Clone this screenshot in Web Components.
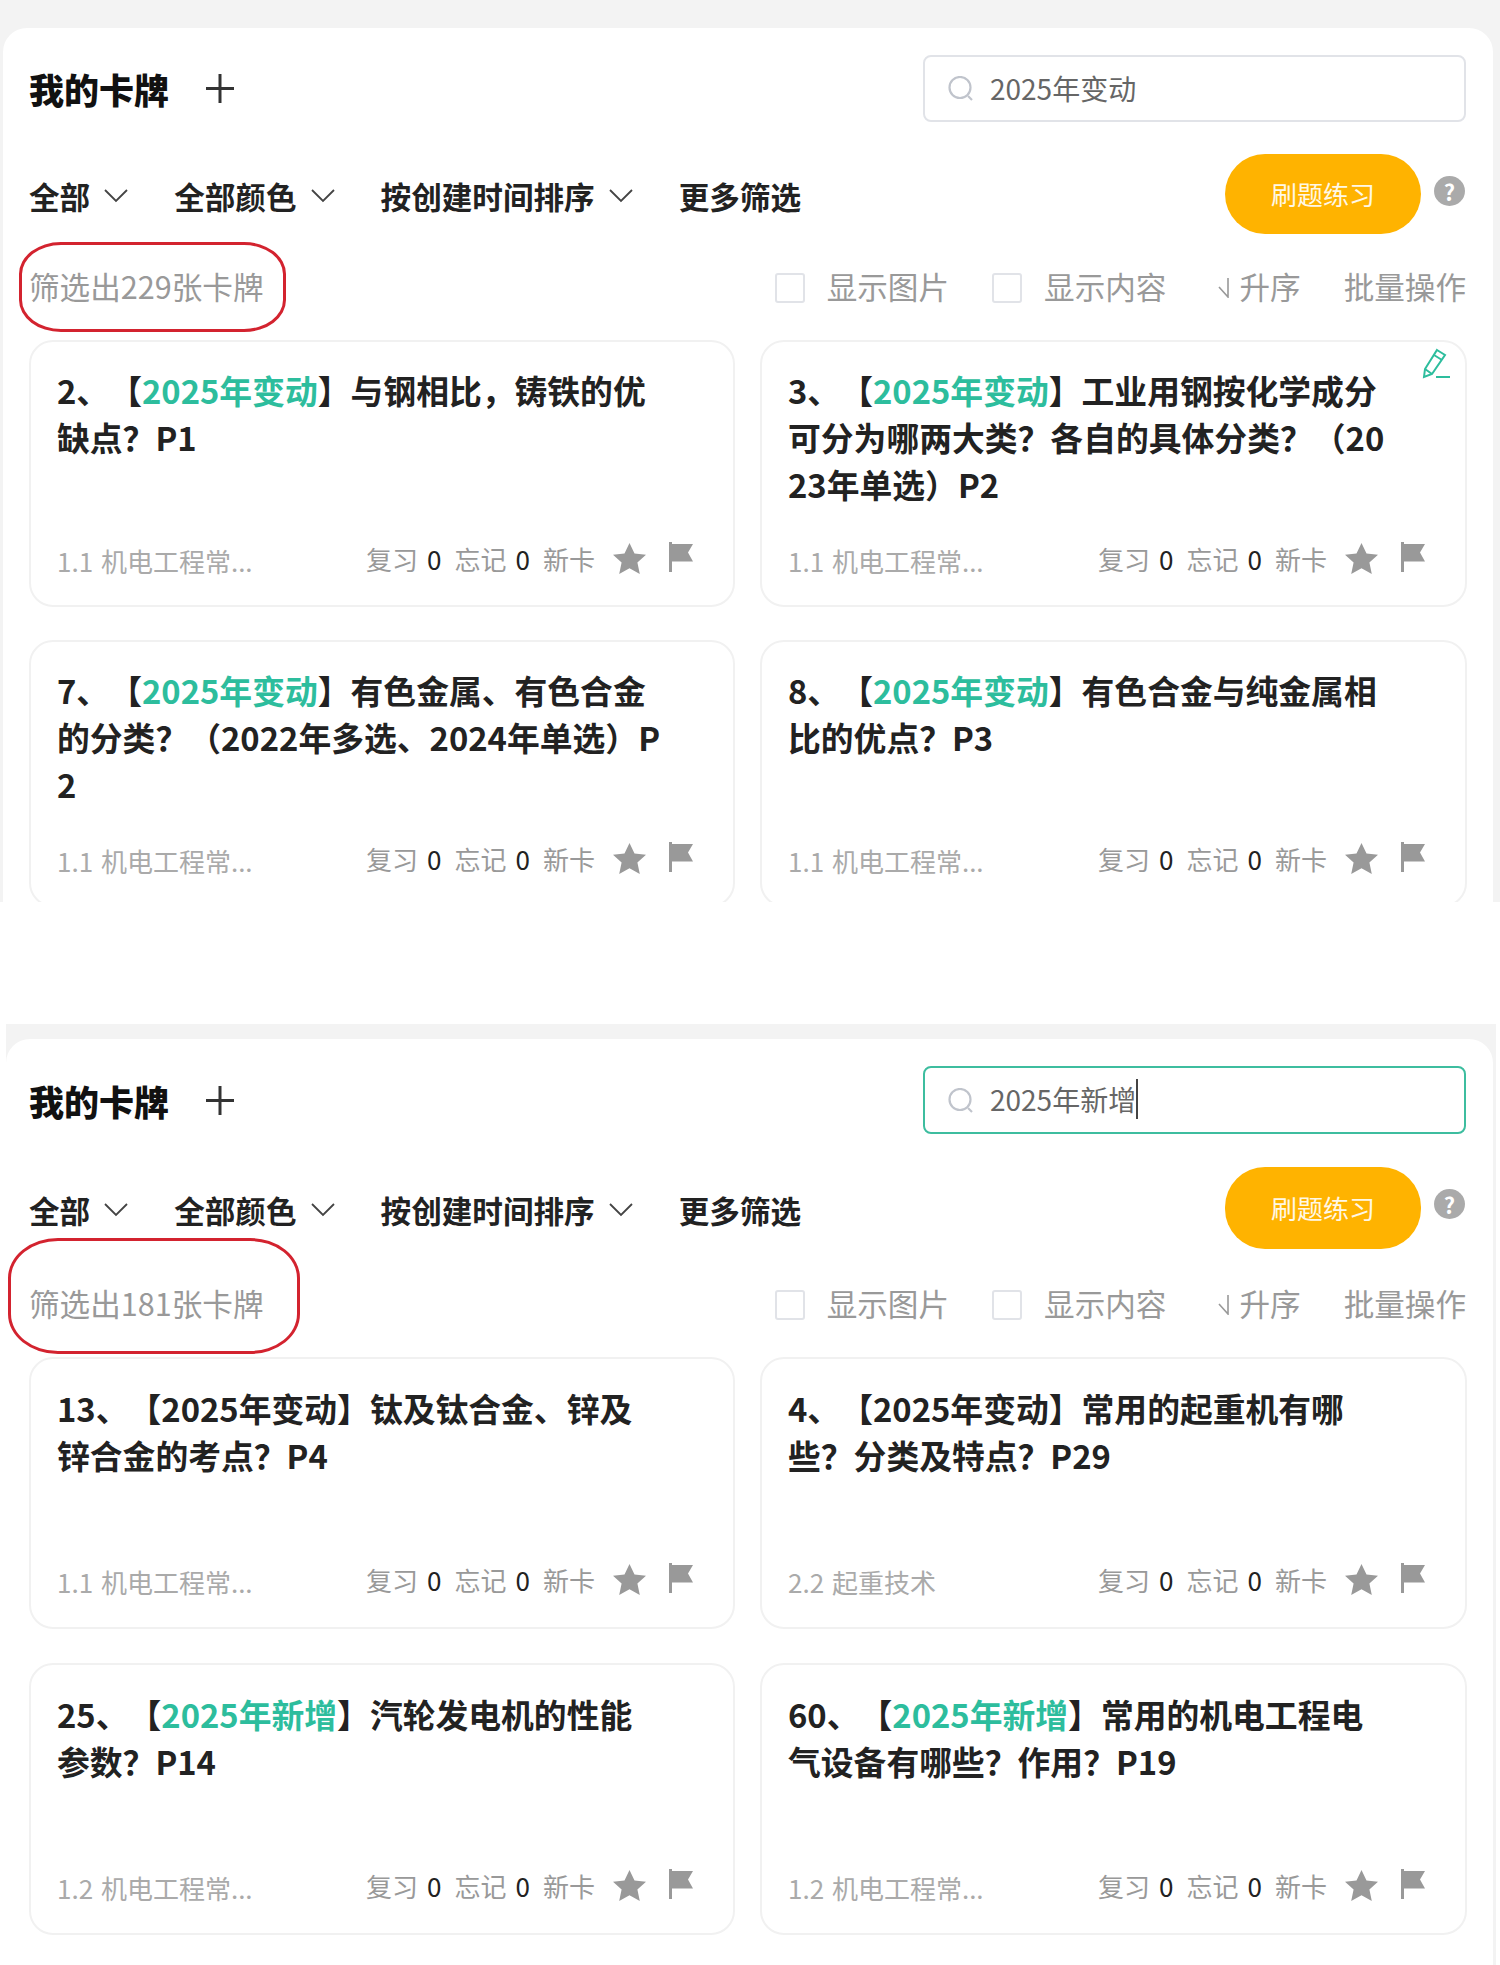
<!DOCTYPE html>
<html lang="zh">
<head>
<meta charset="utf-8">
<title>我的卡牌</title>
<style>
  html, body { margin: 0; background: #fff; }
  body { font-family: "Noto Sans CJK SC", "Noto Sans", sans-serif; color: #222; }
</style>
</head>
<body>

<card-screen query="2025年变动" count="229"
  style="--shell-top:28px;--shell-left:3px;--shell-right:7px;--shell-ml:0px;--shell-mr:0px;--sheet-h:874px;--pad-left:26px;--search-h:67px;--btn-h:80px;--gap-a:32px;--stats-mt:27px;--stats-mb:27px;--card-h:267px;--card-gap:33px;--title-pt:24px;--foot-pb:29px;--ring-l:-10px;--ring-t:-19px;--ring-w:267px;--ring-h:90px;--ring-r:42px / 32px;--after:122px;">
  <deck-card meta="1.1 机电工程常..."><span>2、【<tag-mark>2025年变动</tag-mark>】与钢相比，铸铁的优缺点？P1</span></deck-card>
  <deck-card meta="1.1 机电工程常..." edit><span>3、【<tag-mark>2025年变动</tag-mark>】工业用钢按化学成分可分为哪两大类？各自的具体分类？（2023年单选）P2</span></deck-card>
  <deck-card meta="1.1 机电工程常..."><span>7、【<tag-mark>2025年变动</tag-mark>】有色金属、有色合金的分类？（2022年多选、2024年单选）P2</span></deck-card>
  <deck-card meta="1.1 机电工程常..."><span>8、【<tag-mark>2025年变动</tag-mark>】有色合金与纯金属相比的优点？P3</span></deck-card>
</card-screen>

<card-screen query="2025年新增" count="181" focused
  style="--shell-top:15px;--shell-left:0px;--shell-right:3px;--shell-ml:6px;--shell-mr:4px;--sheet-h:926px;--pad-left:23px;--search-h:68px;--btn-h:82px;--gap-a:33px;--stats-mt:29px;--stats-mb:27px;--card-h:272px;--card-gap:34px;--title-pt:25px;--foot-pb:30px;--ring-l:-21px;--ring-t:-40px;--ring-w:292px;--ring-h:116px;--ring-r:50px / 40px;--after:0px;">
  <deck-card meta="1.1 机电工程常..."><span>13、【2025年变动】钛及钛合金、锌及锌合金的考点？P4</span></deck-card>
  <deck-card meta="2.2 起重技术"><span>4、【2025年变动】常用的起重机有哪些？分类及特点？P29</span></deck-card>
  <deck-card meta="1.2 机电工程常..."><span>25、【<tag-mark>2025年新增</tag-mark>】汽轮发电机的性能参数？P14</span></deck-card>
  <deck-card meta="1.2 机电工程常..."><span>60、【<tag-mark>2025年新增</tag-mark>】常用的机电工程电气设备有哪些？作用？P19</span></deck-card>
</card-screen>

<script>
class TagMark extends HTMLElement {
  constructor() {
    super();
    this.attachShadow({ mode: 'open' });
    this.shadowRoot.innerHTML = `<style>:host { color: #2dbd9d; }</style><slot></slot>`;
  }
}
customElements.define('tag-mark', TagMark);

class DeckCard extends HTMLElement {
  constructor() {
    super();
    this.attachShadow({ mode: 'open' });
  }

  connectedCallback() {
    const pencil = this.hasAttribute('edit') ? `
      <svg class="pencil" width="30" height="32" viewBox="0 0 30 32" fill="none" stroke="#2dbd9d" stroke-width="2">
        <path d="M15 2l8 5L10 26l-8 3 1-8z"/><path d="M12 7l8 5M3 21l7 5"/><path d="M14 29h14"/>
      </svg>` : '';
    this.shadowRoot.innerHTML = `
      <style>
        :host {
          display: flex; flex-direction: column; position: relative; box-sizing: border-box;
          height: var(--card-h); border: 2px solid #f1f1f1; border-radius: 24px;
          padding: var(--title-pt) 40px var(--foot-pb) 26px; background: #fff;
        }
        .title {
          font-size: 32.8px; line-height: 47px; font-weight: 700; color: #222;
          word-break: break-all; text-spacing-trim: space-all; width: 606px;
        }
        .foot { margin-top: auto; display: flex; align-items: center; justify-content: space-between; height: 36px; }
        .meta { font-size: 26px; color: #aaa; position: relative; top: 2px; word-spacing: 2px; }
        .stats { display: flex; align-items: center; font-size: 26px; color: #999; }
        .num { color: #222; margin: 0 13px 0 9px; }
        .star { margin-left: 18px; }
        .flag { margin-left: 23px; position: relative; top: -1px; }
        .pencil { position: absolute; top: 6px; right: 13px; }
      </style>
      ${pencil}
      <div class="title"><slot></slot></div>
      <div class="foot">
        <span class="meta">${this.getAttribute('meta')}</span>
        <span class="stats">
          <span>复习</span><span class="num">0</span>
          <span>忘记</span><span class="num">0</span>
          <span>新卡</span>
          <svg class="star" width="33" height="31" viewBox="0 0 33 31" fill="#999"><path d="M16.5 0l5 10.5 11.5 1.3-8.6 7.8 2.4 11.4-10.3-5.8-10.3 5.8 2.4-11.4L0 11.8l11.5-1.3z"/></svg>
          <svg class="flag" width="24" height="30" viewBox="0 0 24 30" fill="#999"><path d="M0 0h3v30H0z"/><path d="M3 2h21l-5 8.500 5 9H3z"/></svg>
        </span>
      </div>
    `;
  }
}
customElements.define('deck-card', DeckCard);

class CardScreen extends HTMLElement {
  constructor() {
    super();
    this.attachShadow({ mode: 'open' });
  }

  chevron() {
    return `<svg class="chev" width="24" height="14" viewBox="0 0 24 14" fill="none" stroke="#444" stroke-width="1.800"><path d="M1 1l11 11L23 1"/></svg>`;
  }

  connectedCallback() {
    const focused = this.hasAttribute('focused');
    this.shadowRoot.innerHTML = `
      <style>
        :host {
          display: block; box-sizing: border-box; background: #f3f3f3;
          margin-left: var(--shell-ml); margin-right: var(--shell-mr); margin-bottom: var(--after);
          padding: var(--shell-top) var(--shell-right) 0 var(--shell-left);
        }
        .sheet {
          background: #fff; border-radius: 24px 24px 0 0; height: var(--sheet-h); overflow: hidden;
          box-sizing: border-box; padding: 27px 27px 0 var(--pad-left);
        }
        .head { display: flex; align-items: center; justify-content: space-between; height: var(--search-h); }
        .brand { display: flex; align-items: center; gap: 37px; }
        h1 { margin: 0; font-size: 35px; font-weight: 900; color: #111; line-height: 1; }
        .search {
          box-sizing: border-box; width: 543px; height: 100%; display: flex; align-items: center; gap: 16px;
          padding: 0 0 2px 23px; border: 2px solid ${focused ? '#3dbd9f' : '#e1e3e8'}; border-radius: 8px;
          font-size: 28px; color: #666;
        }
        .search svg { position: relative; top: 1px; }
        .caret { border-right: 2px solid #444; }
        .tools { display: flex; justify-content: space-between; margin-top: var(--gap-a); height: var(--btn-h); }
        .filters { display: flex; align-items: center; padding-top: 3px; font-size: 30.6px; font-weight: 700; color: #222; }
        .filters span { display: flex; align-items: center; gap: 14px; margin-right: 46px; }
        .actions { display: flex; gap: 13px; margin-right: 1px; }
        .go {
          box-sizing: border-box; width: 196px; padding-bottom: 2px; border-radius: 40px; background: #ffb300; color: #fff8e6; font-size: 26px;
          display: flex; align-items: center; justify-content: center;
        }
        .help {
          width: 31px; height: 30px; margin-top: 22px; border-radius: 50%; background: #aaa; color: #fff;
          font-size: 22px; font-weight: 700; line-height: 30px; text-align: center;
        }
        .row {
          position: relative; display: flex; align-items: center; justify-content: space-between;
          height: 50px; margin-top: var(--stats-mt); margin-bottom: calc(var(--stats-mb) + 2px);
          font-size: 30.6px; color: #999;
        }
        .ring {
          position: absolute; left: var(--ring-l); top: var(--ring-t); width: var(--ring-w); height: var(--ring-h);
          box-sizing: border-box; border: 3px solid #d3232f; border-radius: var(--ring-r);
        }
        .opts { display: flex; align-items: center; }
        .box {
          width: 30px; height: 30px; box-sizing: border-box; border: 2px solid #e1e3e8; border-radius: 3px;
          margin: 3px 22px 0 0;
        }
        .gap { margin-right: 43px; }
        .arrow { margin: 3px 10px 0 8px; }
        .grid { display: grid; grid-template-columns: 706px 707px; column-gap: 25px; row-gap: var(--card-gap); }
      </style>
      <div class="sheet">
        <div class="head">
          <div class="brand">
            <h1>我的卡牌</h1>
            <svg width="28" height="29" viewBox="0 0 28 29" stroke="#333" stroke-width="3"><path d="M14 0v29M0 14.500h28"/></svg>
          </div>
          <div class="search">
            <svg width="26" height="25" viewBox="0 0 26 25" fill="none" stroke="#c0c4cc" stroke-width="2.200"><circle cx="12" cy="11.500" r="10.500"/><path d="M20 20l4 4"/></svg>
            <span class="${focused ? 'caret' : ''}">${this.getAttribute('query')}</span>
          </div>
        </div>
        <div class="tools">
          <div class="filters">
            <span>全部${this.chevron()}</span>
            <span>全部颜色${this.chevron()}</span>
            <span>按创建时间排序${this.chevron()}</span>
            <span>更多筛选</span>
          </div>
          <div class="actions">
            <div class="go">刷题练习</div>
            <div class="help">?</div>
          </div>
        </div>
        <div class="row">
          <div class="ring"></div>
          <span>筛选出${this.getAttribute('count')}张卡牌</span>
          <div class="opts">
            <i class="box"></i><span class="gap">显示图片</span>
            <i class="box"></i><span class="gap">显示内容</span>
            <svg class="arrow" width="12" height="20" viewBox="0 0 12 20" fill="none" stroke="#999" stroke-width="1.600"><path d="M11 0v19L2 9"/></svg>
            <span class="gap">升序</span>
            <span>批量操作</span>
          </div>
        </div>
        <div class="grid"><slot></slot></div>
      </div>
    `;
  }
}
customElements.define('card-screen', CardScreen);
</script>
</body>
</html>
